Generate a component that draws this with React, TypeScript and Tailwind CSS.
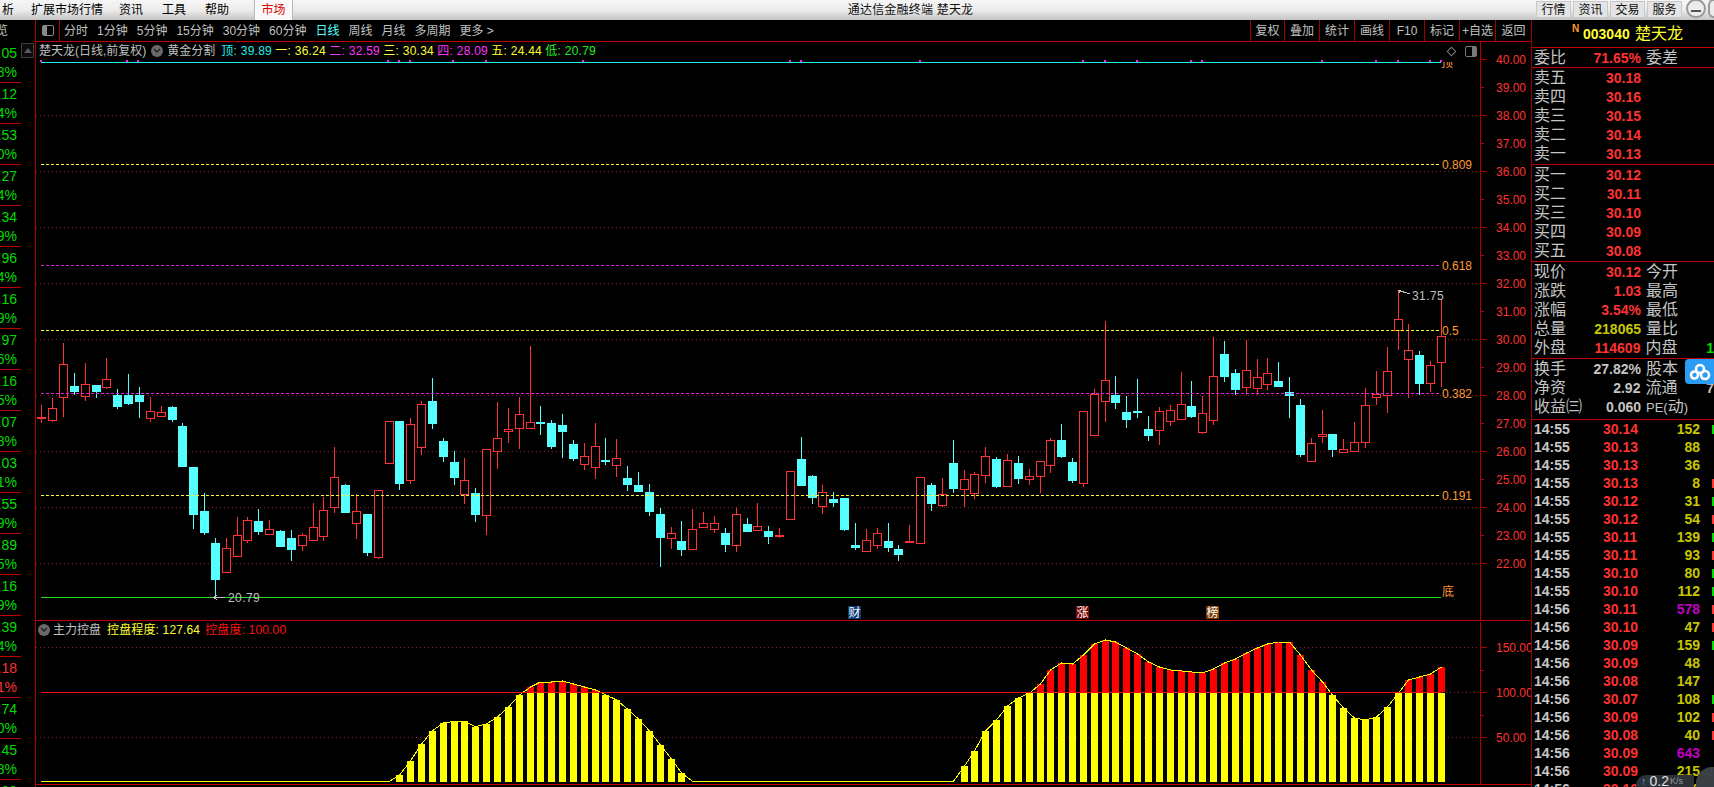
import React from 'react';

type Row = [kind: 'r' | 'c', high: number, top: number, bottom: number, low: number];

// candle rows are kept as 3x offsets from a base y, in day order
const dayRowsA: Row[] = [
  ['r',255,292,296,308],['r',234,265,302,305],['r',69,133,233,291],['c',159,198,216,226],['r',129,193,230,243],
  ['c',195,195,216,234],['r',114,178,202,208],['c',207,225,261,267],['c',162,225,252,255],['c',201,225,246,294],
  ['r',231,274,296,306],['r',258,277,290,292],['c',258,261,300,306],['c',309,318,441,441],['c',441,441,585,627],
  ['c',519,573,639,645],['c',654,669,780,832],['r',654,685,758,758],['r',591,646,710,710],['r',591,601,662,669],
  ['c',567,603,636,645],['r',600,628,644,645],['c',630,633,681,681],['c',630,654,690,723],['r',639,646,677,693],
  ['r',549,622,662,662],['r',531,571,650,663],['r',381,472,562,579],['c',492,495,579,579],['r',522,574,611,657],
  ['c',582,582,699,708],['r',511,511,713,717],['r',304,304,431,431],['c',303,303,492,510],['r',294,313,482,492],
  ['r',243,253,382,405],['c',174,243,312,327],['c',354,363,411,426],['c',393,426,474,495],['r',414,481,524,552],
  ['c',504,519,585,606],['r',387,388,586,645],['r',246,355,393,447],['r',264,328,335,369],['r',231,283,326,387],
  ['r',78,307,326,327],['c',258,306,312,345],['c',300,309,381,387],['c',282,315,336,414],['c',360,372,417,423],
  ['r',369,409,434,450],['r',309,379,443,477],['c',354,420,423,435],['r',357,415,437,471],['c',438,474,495,513],
  ['c',456,495,516,516],['c',492,516,576,588],['c',564,582,654,741],['r',621,640,656,687],['c',603,663,690,708],
  ['r',567,628,689,690],['r',576,610,623,624],['r',588,610,629,639],['c',624,639,675,696],['r',564,583,677,696],
  ['c',594,612,636,636],['r',549,619,632,633],['c',618,633,651,672],['r',624,646,650,654],['r',454,454,599,600],
  ['c',351,417,498,498],['c',465,468,534,552],['r',495,517,560,582],['c',516,537,549,561],['c',534,534,630,633],
  ['c',609,675,684,690],['r',627,661,695,696],['r',624,640,677,687],['c',609,663,684,696],['c',675,687,705,723],
  ['r',615,663,666,669],['r',472,472,671,671],['c',489,495,552,573],['r',474,523,557,561],['c',360,429,507,519],
  ['r',450,478,509,561],['r',456,463,521,537],['r',381,409,467,489],['c',411,417,501,504],
];
const dayRowsB: Row[] = [
  ['r',522,541,620,621],['c',528,549,597,612],['r',567,589,598,615],['r',544,544,590,639],['r',474,481,557,579],
  ['c',432,480,531,534],['c',534,546,603,609],['r',393,394,611,621],['r',327,341,464,465],['r',123,301,365,426],
  ['c',288,345,369,387],['c',348,396,420,444],['c',297,393,399,414],['c',408,447,468,483],['r',381,394,452,495],
  ['r',375,391,425,438],['r',276,373,419,419],['c',303,378,411,414],['r',348,400,458,462],['r',171,289,422,435],
  ['c',183,222,291,306],['c',267,279,330,345],['r',180,271,323,345],['r',237,292,326,345],['r',234,280,314,330],
  ['c',246,303,321,321],['c',291,336,348,414],['c',357,375,525,531],['r',474,490,545,545],['r',390,463,470,489],
  ['c',462,462,510,531],['r',477,508,518,519],['r',426,487,513,513],['r',324,376,488,504],['r',273,342,350,375],
  ['r',201,274,346,399],['r',30,118,150,210],['r',132,211,239,354],['c',213,225,312,345],['r',243,256,311,336],
  ['r',60,169,248,321],
];

const candles = [
  ...dayRowsA.map((r) => ({ kind: r[0], high: 320 + r[1] / 3, top: 320 + r[2] / 3, bottom: 320 + r[3] / 3, low: 320 + r[4] / 3 })),
  ...dayRowsB.map((r) => ({ kind: r[0], high: 280 + r[1] / 3, top: 280 + r[2] / 3, bottom: 280 + r[3] / 3, low: 280 + r[4] / 3 })),
];

// 主力控盘 bar tops, first bar is day 33, second run starts at day 85
const controlA = [495,453,402,362,339,334,334,350,342,321,291,255,231,216,216,213,222,231,240,254,270,297,327,363,405,447,489];
const controlB = [468,423,363,330,288,264,249,222,180,159,162,135,102,90,96,114,132,156,171,180,183,186,189,177,159,147,129,114,102,96,96,135,180,216,255,294,324,330,321,291,249,210,201,192,171];

const controlTop = (i: number) => {
  if (i >= 33 && i < 60) return controlA[i - 33];
  if (i >= 85) return controlB[i - 85];
  return 514;
};

const dayX = (i: number) => Math.round(41.3 + 10.85 * i);
const controlY = (z: number) => 610 + z / 3;

const topDots = [41,127,138,388,399,410,453,486,583,790,801,920,1083,1105,1137,1191,1202,1322,1376,1398,1430,1441];
const priceTicks = Array.from({ length: 19 }, (_, i) => 40 - i);
const priceY = (v: number) => 59.5 + (40 - v) * 28;

const levels = [
  { y: 164.5, color: '#ffff33', label: '0.809' },
  { y: 265.5, color: '#e020e0', label: '0.618' },
  { y: 330.5, color: '#ffff33', label: '0.5' },
  { y: 393.5, color: '#e020e0', label: '0.382' },
  { y: 495.5, color: '#ffff33', label: '0.191' },
];

const stripRows = [
  ['1.05', '3.8%'], ['0.12', '1.4%'], ['2.53', '5.0%'], ['1.27', '2.4%'], ['0.34', '1.9%'], ['3.96', '6.4%'],
  ['0.16', '1.9%'], ['1.97', '4.6%'], ['0.16', '1.5%'], ['2.07', '3.8%'], ['1.03', '2.1%'], ['0.55', '1.9%'],
  ['0.89', '2.5%'], ['0.16', '1.9%'], ['1.39', '2.4%'], ['0.18', '2.1%'], ['1.74', '3.0%'], ['0.45', '1.8%'],
  ['1.20', '2.5%'],
];

const ticks: [string, string, number, string][] = [
  ['14:55','30.14',152,'g'],['14:55','30.13',88,''],['14:55','30.13',36,''],['14:55','30.13',8,'r'],['14:55','30.12',31,'g'],
  ['14:55','30.12',54,'r'],['14:55','30.11',139,'g'],['14:55','30.11',93,'r'],['14:55','30.10',80,'g'],['14:55','30.10',112,'g'],
  ['14:56','30.11',578,'r'],['14:56','30.10',47,'r'],['14:56','30.09',159,'g'],['14:56','30.09',48,''],['14:56','30.08',147,''],
  ['14:56','30.07',108,'g'],['14:56','30.09',102,'r'],['14:56','30.08',40,'r'],['14:56','30.09',643,''],['14:56','30.09',215,''],
  ['14:56','30.10',66,''],
];

function QuoteRow({ label, value, color = 'text-[#ff3232]', label2, tail }: { label: string; value?: string; color?: string; label2?: React.ReactNode; tail?: React.ReactNode }) {
  return (
    <div className="flex flex-1 items-center pl-[2px] whitespace-nowrap">
      <span className="w-[48px] text-[16px] leading-none text-[#c4c4c4]">{label}</span>
      <span className={`w-[59px] text-right text-[14px] leading-none font-bold ${color}`}>{value}</span>
      <span className="ml-[5px] w-[47px] text-[16px] leading-none text-[#c4c4c4]">{label2}</span>
      {tail}
    </div>
  );
}

function Chevron() {
  return (
    <span className="flex h-[12px] w-[12px] items-center justify-center rounded-full bg-[#6a6a6a]">
      <svg width="8" height="6" viewBox="0 0 8 6"><path d="M1 1l3 3 3-3" fill="none" stroke="#1c1c1c" strokeWidth="1.4" /></svg>
    </span>
  );
}

function PriceChart() {
  return (
    <svg width="1495" height="560" viewBox="36 60 1495 560" shapeRendering="crispEdges" className="relative block overflow-visible">
      {priceTicks.filter((v) => v % 2 === 0 && v < 40).map((v) => (
        <line key={v} x1="36" x2="1480" y1={priceY(v)} y2={priceY(v)} stroke="#8a1c1c" strokeDasharray="1 3" />
      ))}
      <line x1="41" x2="1441" y1="62.5" y2="62.5" stroke="#22f0f0" />
      {topDots.map((x) => <rect key={x} x={x - 1} y="60" width="2" height="2" fill="#ff20ff" />)}
      {candles.map((c, i) => {
        const x = dayX(i) + 0.5;
        const color = c.kind === 'r' ? '#ff3333' : '#55ffff';
        return (
          <g key={i}>
            <line x1={x} x2={x} y1={c.high} y2={c.low} stroke={color} />
            {c.kind === 'r'
              ? <rect x={x - 4} y={Math.round(c.top) + 0.5} width="8" height={Math.max(1, Math.round(c.bottom - c.top))} fill="#000" stroke={color} />
              : <rect x={x - 4.5} y={Math.round(c.top)} width="9" height={Math.max(2, Math.round(c.bottom - c.top))} fill={color} />}
          </g>
        );
      })}
      {levels.map((l) => (
        <g key={l.label}>
          <line x1="41" x2="1441" y1={l.y} y2={l.y} stroke={l.color} strokeDasharray="3 2" />
          <text x="1442" y={l.y + 4} fontSize="12" fill="#ff9933">{l.label}</text>
        </g>
      ))}
      <line x1="41" x2="1441" y1="597.5" y2="597.5" stroke="#22dd22" />
      <text x="1442" y="596" fontSize="12" fill="#ff9933">底</text>
      <svg x="1441" y="62" width="12" height="7" viewBox="0 0 12 7" overflow="hidden">
        <text x="0" y="5" fontSize="12" fill="#ff9933">顶</text>
      </svg>
      <path d="M225 597.5H214M217 595l-3 2.5 3 2.5" fill="none" stroke="#c0c0c0" />
      <text x="228" y="602" fontSize="12" letterSpacing="0.4" fill="#c0c0c0">20.79</text>
      <path d="M1398.500 290.500L1410 294M1399 290l3 2M1399 290v3" fill="none" stroke="#c0c0c0" />
      <text x="1412" y="300" fontSize="12" letterSpacing="0.4" fill="#c0c0c0">31.75</text>
      <rect x="848" y="606" width="13" height="13" fill="#0b3a72" />
      <text x="848.500" y="617" fontSize="12" fill="#fff">财</text>
      <rect x="1076" y="606" width="13" height="13" fill="#7a0606" />
      <text x="1076.500" y="617" fontSize="12" fill="#fff">涨</text>
      <rect x="1206" y="606" width="13" height="13" fill="#7a3c08" />
      <text x="1206.500" y="617" fontSize="12" fill="#fff">榜</text>
      <line x1="1480.500" x2="1480.500" y1="60" y2="620" stroke="#b00000" />
      {priceTicks.map((v) => (
        <g key={v}>
          <line x1="1481" x2={v % 2 === 0 ? 1487 : 1484} y1={priceY(v)} y2={priceY(v)} stroke="#b00000" />
          <text x="1496" y={priceY(v) + 4.5} fontSize="12" fill="#ff3232">{v.toFixed(2)}</text>
        </g>
      ))}
    </svg>
  );
}

function ControlChart() {
  const curve = candles.map((_, i) => `${dayX(i) + 0.5},${controlY(controlTop(i))}`).join(' ');
  return (
    <svg width="1495" height="147" viewBox="36 637 1495 147" shapeRendering="crispEdges" className="block">
      <line x1="36" x2="1480" y1="647.5" y2="647.5" stroke="#8a1c1c" strokeDasharray="1 3" />
      <line x1="36" x2="1480" y1="737.5" y2="737.5" stroke="#8a1c1c" strokeDasharray="1 3" />
      <line x1="1442" x2="1480" y1="692.5" y2="692.5" stroke="#8a1c1c" strokeDasharray="1 3" />
      {candles.map((_, i) => {
        const z = controlTop(i);
        if (z >= 514) return null;
        const y = Math.round(controlY(z));
        const x = dayX(i) - 3;
        return (
          <g key={i}>
            {y < 692 && <rect x={x} y={y} width="7" height={692 - y} fill="#ff0000" />}
            <rect x={x} y={Math.max(y, 693)} width="7" height={782 - Math.max(y, 693)} fill="#ffff00" />
          </g>
        );
      })}
      <polyline points={`41,${controlY(514)} ${curve}`} fill="none" stroke="#ffff00" strokeWidth="1" />
      <line x1="41" x2="1441" y1="692.5" y2="692.5" stroke="#ee1010" />
      <line x1="1480.500" x2="1480.500" y1="637" y2="784" stroke="#b00000" />
      {[150, 125, 100, 75, 50].map((v) => {
        const y = 692.5 + (100 - v) * 0.9;
        return <line key={v} x1="1481" x2={v % 50 === 0 ? 1487 : 1484} y1={y} y2={y} stroke="#b00000" />;
      })}
      {[150, 100, 50].map((v) => (
        <text key={v} x="1496" y={697 + (100 - v) * 0.9} fontSize="12" fill="#ff3232">{v.toFixed(2)}</text>
      ))}
    </svg>
  );
}

export default function App() {
  return (
    <div className="relative flex h-[787px] w-[1714px] flex-col overflow-hidden bg-black [font-family:'Liberation_Sans','Noto_Sans_CJK_SC',sans-serif]">
      {/* window menu bar */}
      <div className="flex h-[20px] shrink-0 items-center bg-gradient-to-b from-[#f6f6f6] via-[#ececec] to-[#c4c4c4] text-[12px] leading-none text-black">
        <span className="ml-[2px]">析</span>
        <span className="ml-[17px]">扩展市场行情</span>
        <span className="ml-[16px]">资讯</span>
        <span className="ml-[19px]">工具</span>
        <span className="ml-[19px]">帮助</span>
        <span className="ml-[25px] flex h-[20px] w-[39px] items-center justify-center border-x border-[#b8b8b8] bg-[#fafafa] text-[#e00000]">市场</span>
        <span className="flex-1 pr-[8px] text-center tracking-[0.2px] text-[#111]">通达信金融终端 楚天龙</span>
        <div className="flex h-[18px] items-start gap-[2px]">
          {['行情', '资讯', '交易', '服务'].map((t) => (
            <span key={t} className="flex h-[17px] w-[35px] items-center justify-center border border-[#c8c8c8] bg-[#e4e4e4] text-[#111]">{t}</span>
          ))}
          <span className="ml-[2px] flex h-[19px] w-[20px] -translate-y-[2px] items-center justify-center rounded-full border-2 border-[#9a9a9a] bg-[#ececec]">
            <span className="mt-[4px] h-[2px] w-[10px] bg-[#555]" />
          </span>
          <span className="h-[19px] w-[6px] -translate-y-[2px] rounded-l-full border-2 border-r-0 border-[#9a9a9a] bg-[#ececec]" />
        </div>
      </div>

      <div className="flex min-h-0 flex-1">
        {/* clipped quote list on the left */}
        <div className="flex h-full w-[36px] shrink-0 border-r border-[#b00000]">
          <div className="w-[21px] overflow-hidden">
            <div className="flex h-[22px] w-[8px] items-center justify-end overflow-hidden text-[12px] text-[#c0c0c0]">
              <span className="shrink-0">览</span>
            </div>
            {stripRows.map(([num, pct], i) => (
              <div key={i} className={`box-border flex h-[41px] flex-col border-b border-[#c00000] pt-[2px] text-[14px] leading-[19px] ${i === 15 ? 'text-[#ff3232]' : 'text-[#00dc00]'}`}>
                <div className="flex h-[19px] w-[17px] justify-end overflow-hidden"><span className="shrink-0">{num}</span></div>
                <div className="flex h-[19px] w-[17px] justify-end overflow-hidden"><span className="shrink-0">{pct}</span></div>
              </div>
            ))}
          </div>
          <div className="w-[14px] pt-[23px]">
            <div className="flex h-[15px] w-[13px] items-center justify-center border border-[#3c3c3c] bg-[#0c0c0c]">
              <span className="h-0 w-0 border-x-[4px] border-b-[5px] border-x-transparent border-b-[#5a5a5a]" />
            </div>
          </div>
        </div>

        {/* chart column */}
        <div className="flex h-full min-w-0 flex-1 flex-col">
          <div className="box-border flex h-[22px] shrink-0 items-center border-b border-[#c00000] text-[12px] leading-none text-[#c0c0c0]">
            <div className="flex h-full w-[24px] shrink-0 items-center border-r border-[#b00000] pl-[6px]">
              <span className="flex h-[11px] w-[12px] rounded-[2px] border border-[#8a8a8a]">
                <span className="h-full w-[4px] bg-[#8a8a8a]" />
              </span>
            </div>
            <div className="flex items-center gap-[9px] pl-[4px]">
              <span>分时</span><span>1分钟</span><span>5分钟</span><span>15分钟</span><span>30分钟</span><span>60分钟</span>
              <span className="text-[#55ffff]">日线</span><span>周线</span><span>月线</span><span>多周期</span><span>更多 &gt;</span>
            </div>
            <div className="ml-auto flex h-full">
              {[['复权','w-[34px]'],['叠加','w-[35px]'],['统计','w-[35px]'],['画线','w-[35px]'],['F10','w-[35px]'],['标记','w-[35px]'],['+自选','w-[36px]'],['返回','w-[36px]']].map(([t, w]) => (
                <span key={t} className={`box-border flex h-full items-center justify-center border-l border-[#a00000] ${w}`}>{t}</span>
              ))}
            </div>
          </div>

          <div className="flex h-[18px] shrink-0 items-center text-[12px] leading-none whitespace-nowrap">
            <span className="ml-[3px] text-[#c0c0c0]">楚天龙(日线,前复权)</span>
            <span className="ml-[5px]"><Chevron /></span>
            <span className="ml-[4px] text-[#c0c0c0]">黄金分割</span>
            <span className="ml-[6px] w-[54px] tracking-[0.25px] text-[#22eeee]">顶: 39.89</span>
            <span className="w-[54px] tracking-[0.25px] text-[#ffff33]">一: 36.24</span>
            <span className="w-[54px] tracking-[0.25px] text-[#ff33ff]">二: 32.59</span>
            <span className="w-[54px] tracking-[0.25px] text-[#ffff33]">三: 30.34</span>
            <span className="w-[54px] tracking-[0.25px] text-[#ff33ff]">四: 28.09</span>
            <span className="w-[54px] tracking-[0.25px] text-[#ffff33]">五: 24.44</span>
            <span className="tracking-[0.25px] text-[#22ee22]">低: 20.79</span>
            <span className="ml-auto flex items-center gap-[10px] pr-[3px]">
              <span className="h-[7px] w-[7px] rotate-45 border border-[#7a7a7a]" />
              <span className="flex h-[11px] w-[12px] justify-end rounded-[2px] border border-[#7a7a7a]"><span className="h-full w-[4px] bg-[#7a7a7a]" /></span>
            </span>
            <span className="h-full w-[51px] border-l border-[#b00000]" />
          </div>

          <PriceChart />

          <div className="box-border flex h-[17px] shrink-0 items-center border-t border-[#c00000] pt-[1px] text-[12px] leading-none whitespace-nowrap">
            <span className="ml-[2px]"><Chevron /></span>
            <span className="ml-[3px] text-[#c0c0c0]">主力控盘</span>
            <span className="ml-[6px] tracking-[0.15px] text-[#ffff33]">控盘程度: 127.64</span>
            <span className="ml-[5px] tracking-[0.15px] text-[#ff1010]">控盘度: 100.00</span>
            <span className="ml-auto h-full w-[51px] border-l border-[#b00000]" />
          </div>

          <ControlChart />
          <div className="flex-1 border-t border-[#c00000]" />
        </div>

        {/* quote panel */}
        <div className="flex h-full w-[183px] shrink-0 flex-col overflow-hidden border-l border-[#a00000]">
          <div className="box-border flex h-[28px] shrink-0 items-center border-b border-[#c00000] pl-[40px]">
            <span className="mb-[10px] w-[11px] text-[10px] leading-none font-bold text-[#ff9933]">N</span>
            <span className="w-[52px] text-[14px] leading-none font-bold text-[#ffff33]">003040</span>
            <span className="text-[16px] leading-none text-[#ffff33]">楚天龙</span>
          </div>
          <div className="box-border flex h-[20px] shrink-0 border-b border-[#c00000]">
            <QuoteRow label="委比" value="71.65%" label2="委差" />
          </div>
          <div className="box-border flex h-[97px] shrink-0 flex-col border-b border-[#c00000]">
            <QuoteRow label="卖五" value="30.18" />
            <QuoteRow label="卖四" value="30.16" />
            <QuoteRow label="卖三" value="30.15" />
            <QuoteRow label="卖二" value="30.14" />
            <QuoteRow label="卖一" value="30.13" />
          </div>
          <div className="box-border flex h-[97px] shrink-0 flex-col border-b border-[#c00000]">
            <QuoteRow label="买一" value="30.12" />
            <QuoteRow label="买二" value="30.11" />
            <QuoteRow label="买三" value="30.10" />
            <QuoteRow label="买四" value="30.09" />
            <QuoteRow label="买五" value="30.08" />
          </div>
          <div className="box-border flex h-[97px] shrink-0 flex-col border-b border-[#c00000]">
            <QuoteRow label="现价" value="30.12" label2="今开" />
            <QuoteRow label="涨跌" value="1.03" label2="最高" />
            <QuoteRow label="涨幅" value="3.54%" label2="最低" />
            <QuoteRow label="总量" value="218065" color="text-[#c8c800]" label2="量比" />
            <QuoteRow label="外盘" value="114609" label2="内盘" tail={<span className="ml-[14px] text-[14px] leading-none font-bold text-[#00dc00]">1</span>} />
          </div>
          <div className="box-border flex h-[61px] shrink-0 flex-col border-b border-[#c00000] pb-[3px]">
            <QuoteRow label="换手" value="27.82%" color="text-[#c4c4c4]" label2="股本" />
            <QuoteRow label="净资" value="2.92" color="text-[#c4c4c4]" label2="流通" tail={<span className="ml-[14px] text-[14px] leading-none font-bold text-[#c4c4c4]">7</span>} />
            <QuoteRow label="收益㈢" value="0.060" color="text-[#c4c4c4]" label2={<><span className="text-[13px]">PE(</span>动<span className="text-[13px]">)</span></>} />
          </div>
          <div className="min-h-0 flex-1 overflow-hidden">
            {ticks.map(([time, price, vol, side], i) => (
              <div key={i} className="flex h-[18px] items-center text-[14px] leading-none font-bold whitespace-nowrap">
                <span className="w-[71px] pl-[2px] text-[#c8c8c8]">{time}</span>
                <span className="w-[60px] text-[#ff3232]">{price}</span>
                <span className={`w-[37px] text-right ${vol > 500 ? 'text-[#c000c0]' : 'text-[#c8c800]'}`}>{vol}</span>
                {side && <span className={`ml-[12px] h-[9px] w-[2px] ${side === 'r' ? 'bg-[#ff3232]' : 'bg-[#00dc00]'}`} />}
              </div>
            ))}
          </div>
        </div>
      </div>

      {/* desktop widgets floating over the window */}
      <div className="absolute top-[359px] right-0 flex h-[25px] w-[29px] items-center justify-center rounded-l-[4px] bg-[#2b9bf4]">
        <svg width="22" height="18" viewBox="0 0 22 18" fill="none" stroke="#fff" strokeWidth="2.6">
          <circle cx="11" cy="6" r="4" />
          <circle cx="5.500" cy="12" r="3.500" />
          <circle cx="16" cy="12" r="4" />
        </svg>
      </div>
      <div className="absolute right-[20px] bottom-0 flex h-[12px] w-[58px] items-center rounded-tl-[10px] bg-[#2c3237] pl-[5px] leading-none">
        <span className="text-[11px] font-bold text-[#38a8f0]">↑</span>
        <span className="ml-[3px] text-[14px] text-[#e0e0e0]">0.2</span>
        <span className="ml-[1px] text-[9px] text-[#9a9a9a]">K/s</span>
      </div>
      <div className="absolute right-0 bottom-0 h-[20px] w-[18px] rounded-tl-[16px] bg-[#3a4044]" />
    </div>
  );
}
